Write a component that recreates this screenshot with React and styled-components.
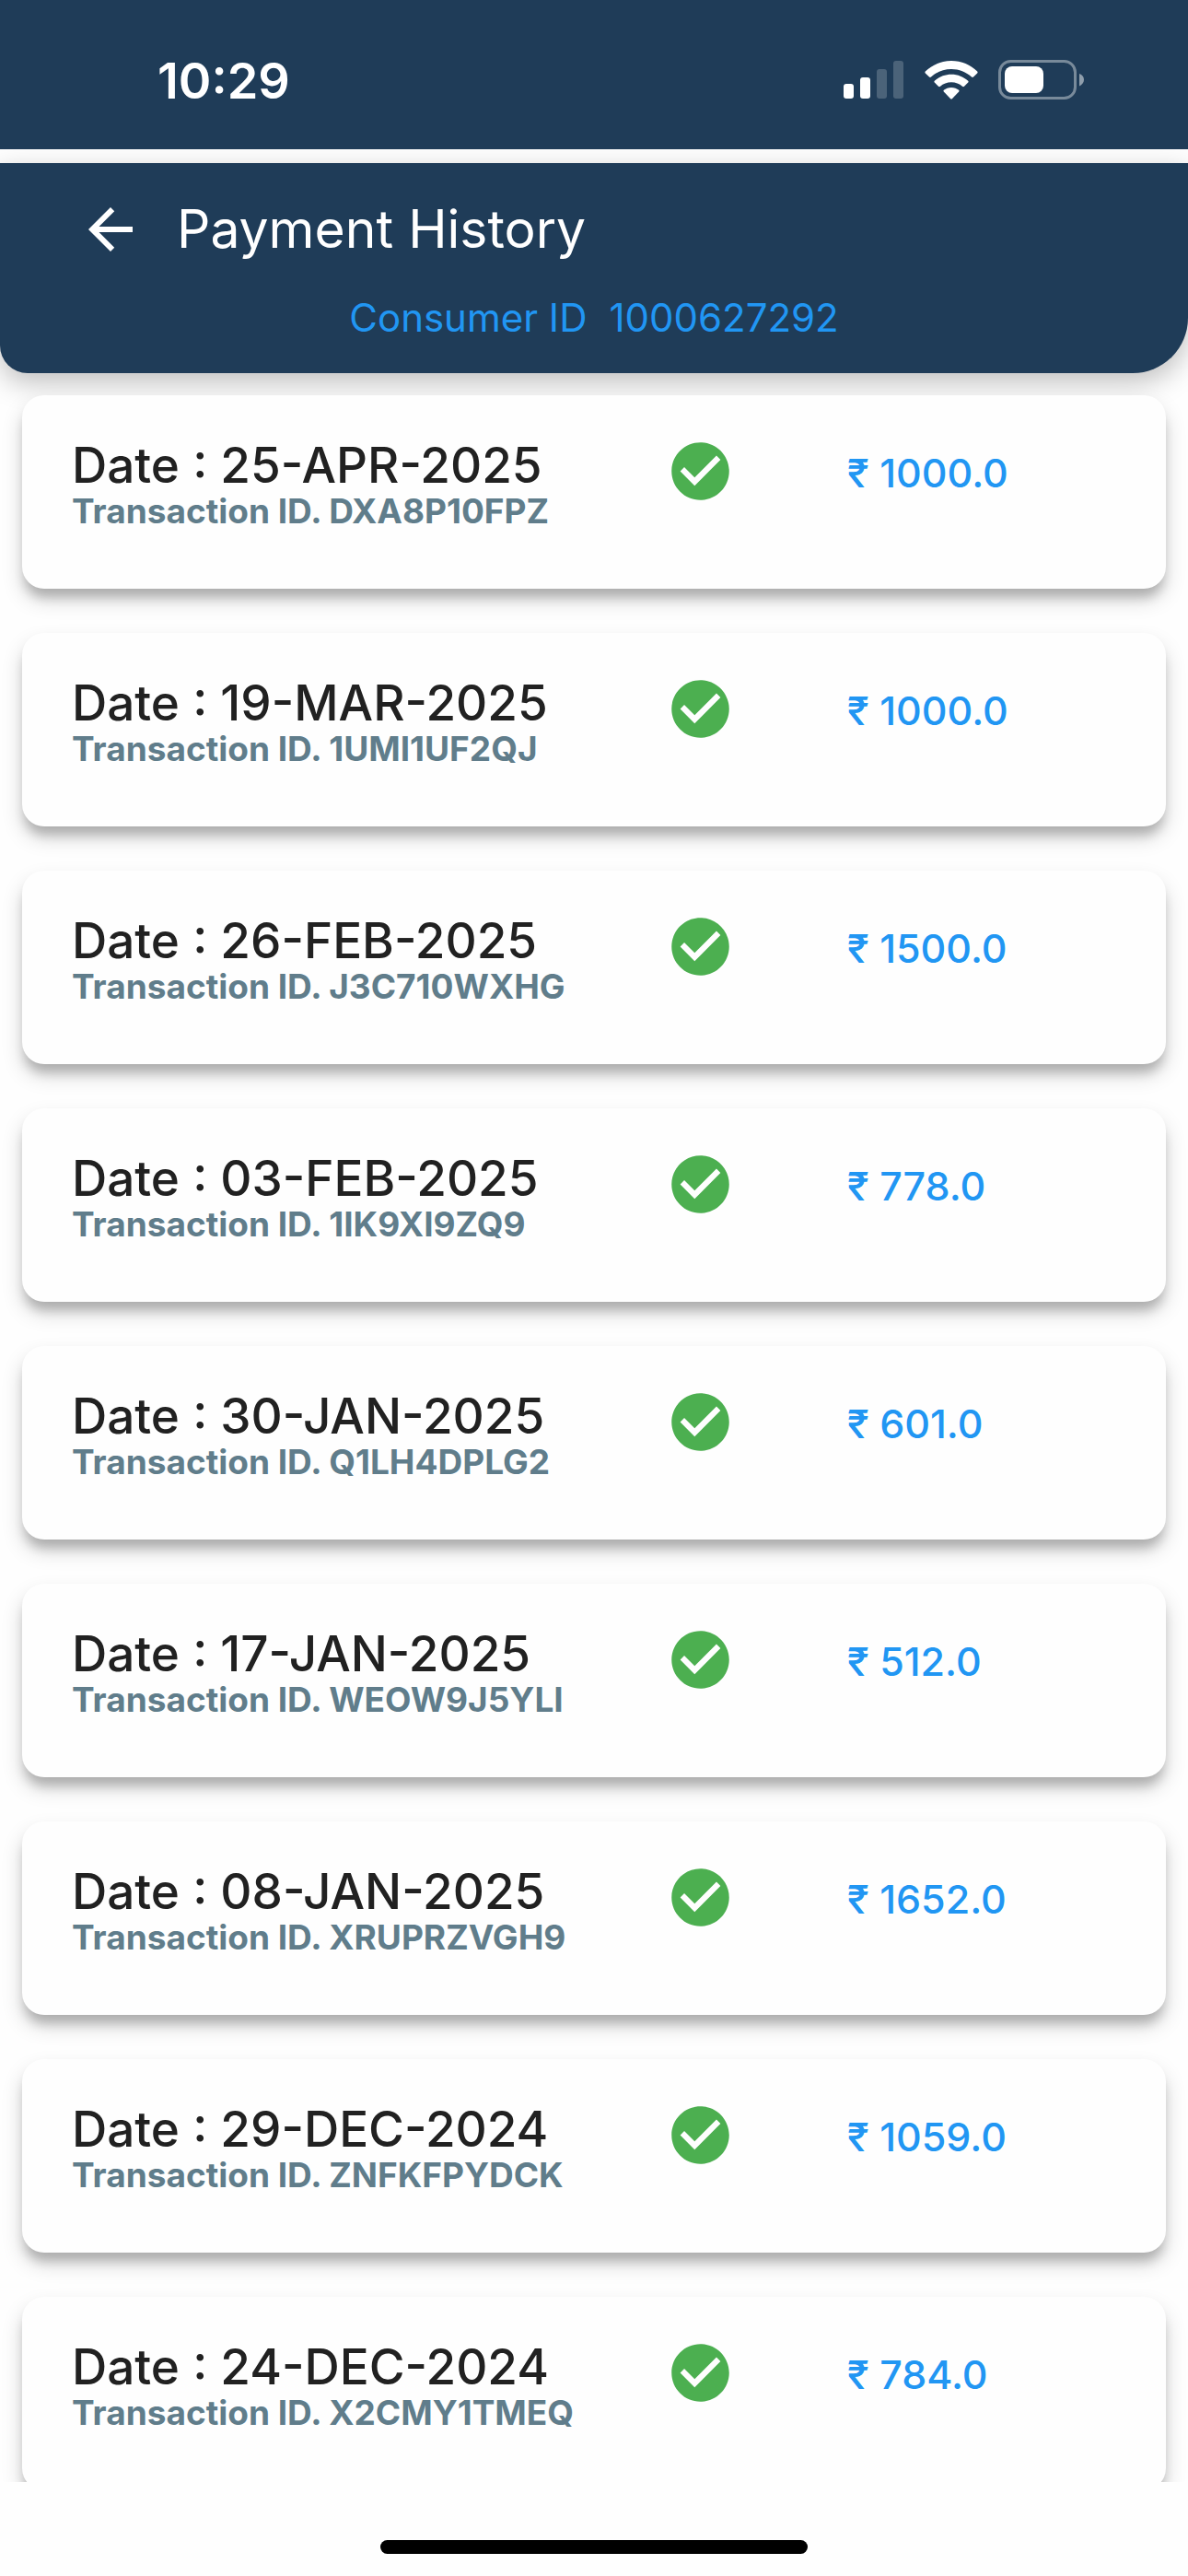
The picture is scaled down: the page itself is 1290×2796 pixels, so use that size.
import styled, { createGlobalStyle } from 'styled-components';
import { MdArrowBack, MdCheckCircle } from 'react-icons/md';

const navy = '#1f3c58';
const blue = '#2196f3';

const payments = [
  { date: '25-APR-2025', transactionId: 'DXA8P10FPZ', amount: '1000.0' },
  { date: '19-MAR-2025', transactionId: '1UMI1UF2QJ', amount: '1000.0' },
  { date: '26-FEB-2025', transactionId: 'J3C710WXHG', amount: '1500.0' },
  { date: '03-FEB-2025', transactionId: '1IK9XI9ZQ9', amount: '778.0' },
  { date: '30-JAN-2025', transactionId: 'Q1LH4DPLG2', amount: '601.0' },
  { date: '17-JAN-2025', transactionId: 'WEOW9J5YLI', amount: '512.0' },
  { date: '08-JAN-2025', transactionId: 'XRUPRZVGH9', amount: '1652.0' },
  { date: '29-DEC-2024', transactionId: 'ZNFKFPYDCK', amount: '1059.0' },
  { date: '24-DEC-2024', transactionId: 'X2CMY1TMEQ', amount: '784.0' },
];

const GlobalStyle = createGlobalStyle`
  * {
    box-sizing: border-box;
  }
  body {
    margin: 0;
    background: #fefefe;
    font-family: Inter, Roboto, sans-serif;
  }
`;

const Screen = styled.div`
  display: flex;
  flex-direction: column;
  height: 100vh;
  overflow: hidden;
`;

const StatusBar = styled.div`
  flex: none;
  z-index: 1;
  display: flex;
  align-items: center;
  justify-content: space-between;
  height: 162px;
  padding: 12px 112px 0 171px;
  background: ${navy};
  color: #fff;
`;

const Clock = styled.time`
  padding-top: 2px;
  font-size: 54px;
  font-weight: 600;
  line-height: 60px;
`;

const StatusIcons = styled.div`
  display: flex;
  align-items: center;
  gap: 22px;
`;

const Header = styled.header`
  flex: none;
  margin-top: 15px;
  height: 228px;
  padding: 36px 84px 0;
  border-radius: 0 0 60px 30px;
  background: ${navy};
  box-shadow: 0 10px 30px rgba(0, 0, 0, 0.25);
`;

const TitleRow = styled.div`
  display: flex;
  align-items: center;
  gap: 36px;
  height: 72px;
`;

const BackButton = styled.button`
  display: flex;
  padding: 0;
  border: 0;
  background: none;
  color: #fff;
  font-size: 72px;
`;

const Title = styled.h1`
  margin: 0;
  color: #fff;
  font-size: 57px;
  font-weight: 400;
  line-height: 72px;
`;

const Consumer = styled.p`
  display: flex;
  justify-content: center;
  gap: 24px;
  margin: 36px 0 0;
  color: ${blue};
  font-size: 42px;
  line-height: 48px;
`;

const PaymentList = styled.ul`
  flex: 1;
  min-height: 0;
  overflow: hidden;
  display: flex;
  flex-direction: column;
  gap: 48px;
  margin: 0;
  padding: 24px 24px 0;
  list-style: none;
`;

const PaymentCard = styled.li`
  flex: none;
  display: grid;
  grid-template-columns: minmax(0, 1fr) 197px 346px;
  align-items: start;
  height: 210px;
  padding: 45px 0 0 54px;
  border-radius: 24px;
  background: #fefefe;
  box-shadow: 0 12px 12px -3px rgba(0, 0, 0, 0.2), 0 12px 22px rgba(0, 0, 0, 0.17);
`;

const PaymentDate = styled.div`
  color: #212121;
  font-size: 53px;
  font-weight: 500;
  line-height: 62px;
`;

const TransactionId = styled.div`
  color: #607d8b;
  font-size: 37px;
  font-weight: 700;
  line-height: 38px;
`;

const Paid = styled(MdCheckCircle)`
  color: #4caf50;
  font-size: 75px;
`;

const Amount = styled.div`
  color: ${blue};
  font-size: 43px;
  font-weight: 500;
  line-height: 78px;
`;

const HomeArea = styled.footer`
  flex: none;
  display: flex;
  justify-content: center;
  padding: 63px 0 24px;
`;

const HomeIndicator = styled.div`
  width: 36%;
  height: 15px;
  border-radius: 8px;
  background: #000;
`;

const Signal = () => (
  <svg width="66" height="42" viewBox="0 0 66 42" fill="#fff" aria-hidden="true">
    <rect x="0" y="25" width="11" height="16" rx="3" />
    <rect x="18" y="18" width="11" height="23" rx="3" />
    <rect x="36" y="9" width="11" height="32" rx="3" opacity="0.2" />
    <rect x="54" y="0" width="11" height="41" rx="3" opacity="0.2" />
  </svg>
);

const Wifi = () => (
  <svg width="58" height="42" viewBox="0 0 58 42" fill="#fff" aria-hidden="true">
    <path d="M29 0C40 0 50 4.400 57.200 11.600Q58 12.500 57.200 13.400L53 17.600Q52 18.500 51 17.600C45 12 37.500 9 29 9S13 12 7 17.600Q6 18.500 5 17.600L.8 13.400Q0 12.500.8 11.600C8 4.400 18 0 29 0Z" />
    <path d="M29 14.700C36 14.700 42.500 17.400 47.200 21.800Q48 22.700 47.200 23.500L43 27.800Q42 28.600 41 27.800C37.800 25 33.600 23.300 29 23.300S20.200 25 17 27.800Q16 28.600 15 27.800L10.800 23.500Q10 22.700 10.800 21.800C15.500 17.400 22 14.700 29 14.700Z" />
    <path d="M29 28.900C32.200 28.900 35 30 37.200 31.800Q38 32.600 37.200 33.500L29.800 41.200Q29 42 28.200 41.200L20.800 33.500Q20 32.600 20.800 31.800C23 30 25.800 28.900 29 28.900Z" />
  </svg>
);

const Battery = () => (
  <svg width="94" height="44" viewBox="0 0 94 44" aria-hidden="true">
    <rect x="1.500" y="1.500" width="82" height="40" rx="12" fill="none" stroke="#fff" strokeWidth="3" opacity="0.4" />
    <rect x="7" y="7" width="42" height="29" rx="8" fill="#fff" />
    <path d="M88 15C91 16 93 18.500 93 21.500S91 27 88 28.500Z" fill="#fff" opacity="0.5" />
  </svg>
);

const Payment = ({ date, transactionId, amount }) => (
  <PaymentCard>
    <div>
      <PaymentDate>Date : {date}</PaymentDate>
      <TransactionId>Transaction ID. {transactionId}</TransactionId>
    </div>
    <Paid title="Paid" />
    <Amount>₹ {amount}</Amount>
  </PaymentCard>
);

const App = () => (
  <Screen>
    <GlobalStyle />
    <StatusBar>
      <Clock>10:29</Clock>
      <StatusIcons>
        <Signal />
        <Wifi />
        <Battery />
      </StatusIcons>
    </StatusBar>
    <Header>
      <TitleRow>
        <BackButton type="button" aria-label="Back">
          <MdArrowBack />
        </BackButton>
        <Title>Payment History</Title>
      </TitleRow>
      <Consumer>
        <span>Consumer ID</span>
        <span>1000627292</span>
      </Consumer>
    </Header>
    <PaymentList>
      {payments.map((payment) => (
        <Payment key={payment.transactionId} {...payment} />
      ))}
    </PaymentList>
    <HomeArea>
      <HomeIndicator />
    </HomeArea>
  </Screen>
);

export default App;
